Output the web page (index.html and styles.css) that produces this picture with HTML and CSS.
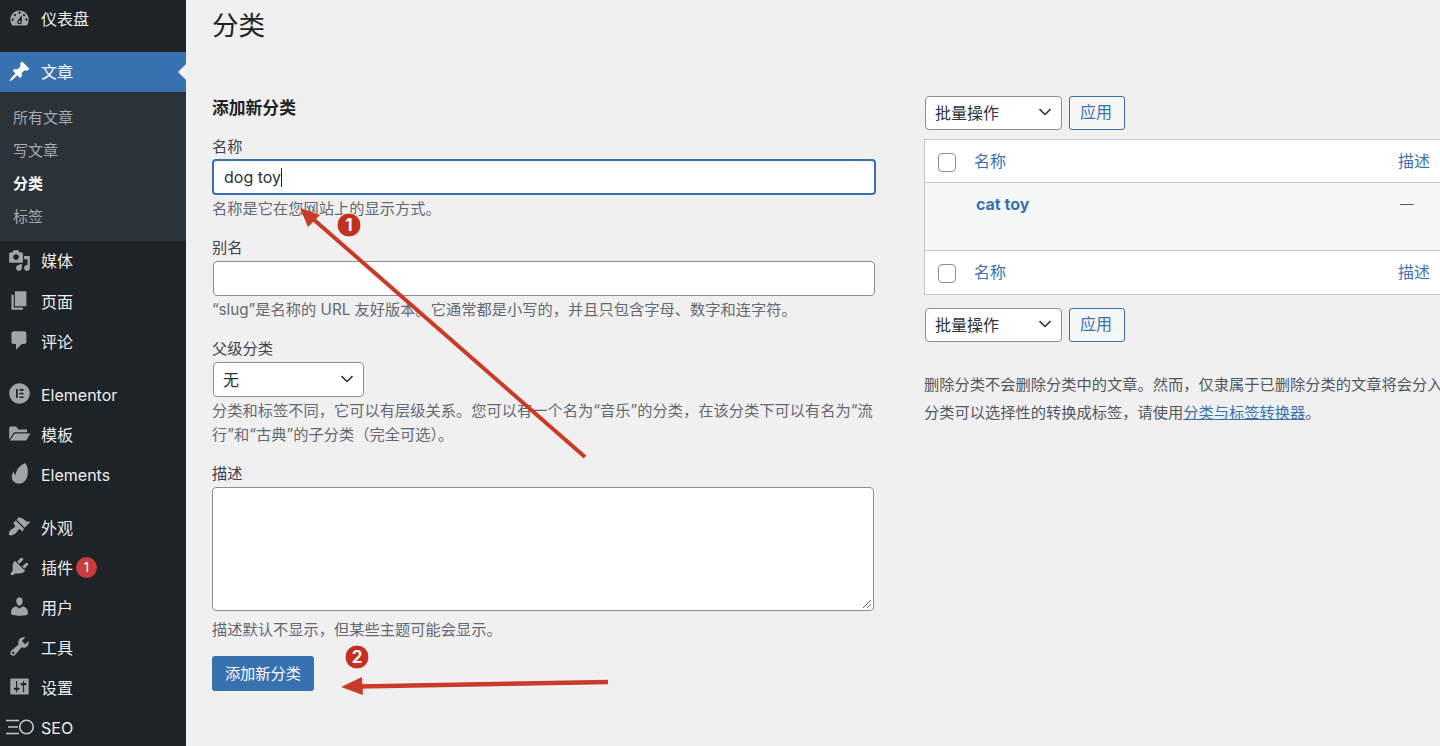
FILE: index.html
```html
<!DOCTYPE html>
<html lang="zh-CN">
<head>
<meta charset="utf-8">
<title>分类</title>
<link rel="stylesheet" href="styles.css">
</head>
<body>
<div class="page">
  <nav class="sidebar">
    <ul class="menu menu-first">
      <li class="item item-up"><svg class="icon" viewBox="0 0 20 20"><path d="M3.76 16h12.48c1.1-1.37 1.76-3.11 1.76-5 0-4.42-3.58-8-8-8s-8 3.58-8 8c0 1.89.66 3.63 1.76 5zM10 4c.55 0 1 .45 1 1s-.45 1-1 1-1-.45-1-1 .45-1 1-1zM6 6c.55 0 1 .45 1 1s-.45 1-1 1-1-.45-1-1 .45-1 1-1zm8 0c.55 0 1 .45 1 1s-.45 1-1 1-1-.45-1-1 .45-1 1-1zm-5.37 5.55L12 7v6c0 1.1-.9 2-2 2s-2-.9-2-2c0-.57.24-1.08.63-1.45zM4 10c.55 0 1 .45 1 1s-.45 1-1 1-1-.45-1-1 .45-1 1-1zm12 0c.55 0 1 .45 1 1s-.45 1-1 1-1-.45-1-1 .45-1 1-1zm-5 3c0-.55-.45-1-1-1s-1 .45-1 1 .45 1 1 1 1-.45 1-1z"/></svg>仪表盘</li>
    </ul>
    <ul class="menu">
      <li class="item item-active item-up"><svg class="icon" viewBox="0 0 20 20"><path d="M10.44 3.02l1.82-1.82 6.36 6.35-1.83 1.82c-1.05-.68-2.48-.57-3.41.36l-.75.75c-.92.93-1.04 2.35-.35 3.41l-1.83 1.82-2.41-2.41-2.8 2.79c-.42.42-3.38 2.71-3.8 2.29s1.86-3.39 2.28-3.81l2.79-2.79L4.1 9.36l1.83-1.82c1.05.69 2.48.57 3.41-.36l.75-.75c.93-.92 1.04-2.35.35-3.41z"/></svg>文章<span class="active-notch"></span></li>
      <li>
        <ul class="submenu">
          <li>所有文章</li>
          <li>写文章</li>
          <li class="current">分类</li>
          <li>标签</li>
        </ul>
      </li>
      <li class="item item-up"><svg class="icon" viewBox="0 0 20 20"><path d="M13 11V4c0-.55-.45-1-1-1h-1.67L9 1H5L3.67 3H2c-.55 0-1 .45-1 1v7c0 .55.45 1 1 1h10c.55 0 1-.45 1-1zM7 4.5c1.38 0 2.5 1.12 2.5 2.5S8.38 9.5 7 9.5 4.5 8.38 4.5 7 5.62 4.5 7 4.5zM14 6h5v10.5c0 1.38-1.12 2.5-2.5 2.5S14 17.88 14 16.5s1.12-2.5 2.5-2.5c.17 0 .34.02.5.05V9h-3V6zm-4 8.05V13h2v3.5c0 1.38-1.12 2.5-2.5 2.5S7 17.88 7 16.5 8.12 14 9.5 14c.17 0 .34.02.5.05z"/></svg>媒体</li>
      <li class="item"><svg class="icon" viewBox="0 0 20 20"><path d="M6 15V2h10v13H6zm-1 1h8v2H3V5h2v11z"/></svg>页面</li>
      <li class="item"><svg class="icon" viewBox="0 0 20 20"><path d="M5 2h9c1.1 0 2 .9 2 2v7c0 1.1-.9 2-2 2h-2l-5 5v-5H5c-1.1 0-2-.9-2-2V4c0-1.1.9-2 2-2z"/></svg>评论</li>
    </ul>
    <ul class="menu">
      <li class="item item-down"><svg class="icon" viewBox="0 0 20 20"><path fill-rule="evenodd" d="M10 1a9 9 0 1 0 0 18 9 9 0 0 0 0-18zM7 6h1.500v8H7zM10 6h3.500v1.500H10zM10 9.250h3.500v1.500H10zM10 12.500h3.500V14H10z"/></svg>Elementor</li>
      <li class="item"><svg class="icon" viewBox="0 0 20 20"><path d="M1 14.500V5l1-1h5l2 2.500h7.500V9H5.200L1.600 14.500zM5.800 10H19.400L15.800 16H1.600z"/></svg>模板</li>
      <li class="item item-down"><svg class="icon" viewBox="0 0 20 20"><path d="M15.200.8c2 3.800 2.700 7.600 1.700 11.300-1 4-3.700 6.700-7.300 6.700-4.100 0-6.800-2.900-6.200-6.800.2-1.400.9-2.800 1.700-3.900.1 1.300.4 2.700 1.400 3.400C7 6.800 10 2.600 15.200.8z"/></svg>Elements</li>
    </ul>
    <ul class="menu">
      <li class="item"><svg class="icon" viewBox="0 0 20 20"><path d="M14.48 11.06L7.41 3.99l1.5-1.5c.5-.56 2.3-.47 3.51.32 1.21.8 1.43 1.28 2.91 2.1 1.18.64 2.45 1.26 4.45.85zm-.71.71L6.7 4.7 4.93 6.47c-.39.39-.39 1.02 0 1.41l1.06 1.06c.39.39.39 1.03 0 1.42-.6.6-1.43 1.11-2.21 1.69-.35.26-.7.53-1.01.84C1.43 13.23.1 16.36 1.2 17.46c1.1 1.1 4.23-.22 5.57-1.57.31-.31.58-.66.84-1.01.58-.78 1.09-1.61 1.69-2.21.39-.39 1.02-.39 1.41 0l1.06 1.06c.39.39 1.02.39 1.41 0z"/></svg>外观</li>
      <li class="item"><svg class="icon" viewBox="0 0 20 20"><path d="M13.11 4.36L9.87 7.6 8 5.73l3.24-3.24c.35-.34 1.05-.2 1.56.32.52.51.66 1.21.31 1.55zm-8 1.77l.91-1.12 9.01 9.01-1.19.84c-.71.71-2.63 1.16-3.82 1.16H6.14L4.9 17.26c-.59.59-1.54.59-2.12 0-.59-.58-.59-1.53 0-2.12l1.24-1.24v-3.88c0-1.13.4-3.19 1.09-3.89zm7.26 3.97l3.24-3.24c.34-.35 1.04-.21 1.55.31.52.51.66 1.21.31 1.55l-3.24 3.25z"/></svg>插件<span class="count">1</span></li>
      <li class="item"><svg class="icon" viewBox="0 0 20 20"><path d="M10 9.25c-2.27 0-2.73-3.44-2.73-3.44C7 4.02 7.82 2 9.97 2c2.16 0 2.98 2.02 2.71 3.81 0 0-.41 3.44-2.68 3.44zm0 2.57L12.72 10c2.39 0 4.52 2.33 4.52 4.53v2.49s-3.65 1.13-7.24 1.13c-3.65 0-7.24-1.13-7.24-1.13v-2.49c0-2.25 1.94-4.48 4.47-4.48z"/></svg>用户</li>
      <li class="item"><svg class="icon" viewBox="0 0 20 20"><path d="M16.68 9.77c-1.34 1.34-3.3 1.67-4.95.99l-5.41 6.52c-.99.99-2.59.99-3.58 0s-.99-2.59 0-3.57l6.52-5.42c-.68-1.65-.35-3.61.99-4.95 1.28-1.28 3.12-1.62 4.72-1.06l-2.89 2.89 2.82 2.82 2.86-2.87c.53 1.58.18 3.39-1.08 4.65zM3.81 16.21c.4.39 1.04.39 1.43 0 .4-.4.4-1.04 0-1.43-.39-.4-1.03-.4-1.43 0-.39.39-.39 1.03 0 1.43z"/></svg>工具</li>
      <li class="item"><svg class="icon" viewBox="0 0 20 20"><path d="M18 16V4c0-.55-.45-1-1-1H3c-.55 0-1 .45-1 1v12c0 .55.45 1 1 1h14c.55 0 1-.45 1-1zM8 11h1c.55 0 1 .45 1 1s-.45 1-1 1H8v1.5c0 .28-.22.5-.5.5s-.5-.22-.5-.5V13H6c-.55 0-1-.45-1-1s.45-1 1-1h1V5.5c0-.28.22-.5.5-.5s.5.22.5.5V11zm5-2h-1c-.55 0-1-.45-1-1s.45-1 1-1h1V5.5c0-.28.22-.5.5-.5s.5.22.5.5V7h1c.55 0 1 .45 1 1s-.45 1-1 1h-1v5.5c0 .28-.22.5-.5.5s-.5-.22-.5-.5V9z"/></svg>设置</li>
      <li class="item item-down"><svg class="icon-seo" viewBox="0 0 30 18"><path d="M1 2.500h13M3 9h10M1 15.500h13" fill="none" stroke-width="1.400"/><circle cx="21.500" cy="9" r="6.800" fill="none" stroke-width="1.600"/></svg>SEO</li>
    </ul>
  </nav>

  <main class="content">
    <h1 class="title">分类</h1>
    <div class="columns">
      <section class="col-form">
        <h2 class="form-title">添加新分类</h2>
        <div class="field">
          <label class="label">名称</label>
          <div class="input input-focus"><span>dog toy</span><span class="caret"></span></div>
          <p class="help">名称是它在您网站上的显示方式。</p>
        </div>
        <div class="field">
          <label class="label">别名</label>
          <div class="input input-alias"></div>
          <p class="help">“slug”是名称的 URL 友好版本。它通常都是小写的，并且只包含字母、数字和连字符。</p>
        </div>
        <div class="field">
          <label class="label">父级分类</label>
          <div class="select select-parent"><span>无</span><svg class="chevron" viewBox="0 0 14 8"><path d="M1.500 1.200 7 6.500l5.500-5.300"/></svg></div>
          <p class="help">分类和标签不同，它可以有层级关系。您可以有一个名为“音乐”的分类，在该分类下可以有名为“流行”和“古典”的子分类（完全可选）。</p>
        </div>
        <div class="field">
          <label class="label">描述</label>
          <div class="textarea"><svg class="grip" viewBox="0 0 10 10"><path d="M9 1 1 9M9 5 5 9"/></svg></div>
          <p class="help help-gap">描述默认不显示，但某些主题可能会显示。</p>
        </div>
        <div class="submit">添加新分类</div>
      </section>

      <section class="col-list">
        <div class="toolbar">
          <div class="select select-bulk"><span>批量操作</span><svg class="chevron" viewBox="0 0 14 8"><path d="M1.500 1.200 7 6.500l5.500-5.300"/></svg></div>
          <div class="apply">应用</div>
        </div>
        <div class="table">
          <div class="row row-head"><span class="check"></span><span class="link name">名称</span><span class="link desc">描述</span></div>
          <div class="row row-body"><strong class="link term">cat toy</strong><span class="dash">—</span></div>
          <div class="row row-foot"><span class="check"></span><span class="link name">名称</span><span class="link desc">描述</span></div>
        </div>
        <div class="toolbar toolbar-bottom">
          <div class="select select-bulk"><span>批量操作</span><svg class="chevron" viewBox="0 0 14 8"><path d="M1.500 1.200 7 6.500l5.500-5.300"/></svg></div>
          <div class="apply">应用</div>
        </div>
        <div class="notes">
          <p>删除分类不会删除分类中的文章。然而，仅隶属于已删除分类的文章将会分入</p>
          <p>分类可以选择性的转换成标签，请使用<a class="underline">分类与标签转换器</a>。</p>
        </div>
      </section>
    </div>
  </main>

  <svg class="annotations" viewBox="0 0 1440 746">
    <g class="arrow">
      <path class="shaft" d="M585 457 312 218"/>
      <path class="head" d="M300 208 320 215 308 227z"/>
      <path class="shaft shaft-thick" d="M608 682 358 686.500"/>
      <path class="head" d="M341 687 362 677 363 695z"/>
    </g>
    <g class="marker">
      <circle cx="349" cy="225" r="12"/>
      <text x="349" y="231">1</text>
      <circle cx="357" cy="657" r="12"/>
      <text x="357" y="663">2</text>
    </g>
  </svg>
</div>
</body>
</html>
```

FILE: styles.css
```css
* { box-sizing: border-box; }

html, body {
  margin: 0;
  height: 100%;
  overflow: hidden;
}

body {
  background: #f0f0f1;
  color: #3c434a;
  font-family: Inter, "Noto Sans CJK SC", "Liberation Sans", sans-serif;
  font-size: 15.250px;
}

ul { list-style: none; margin: 0; padding: 0; }
p, h1, h2 { margin: 0; }

.page {
  position: relative;
  display: flex;
  width: 1440px;
  height: 746px;
  overflow: hidden;
}

/* Sidebar */
.sidebar {
  flex: 0 0 186px;
  background: #1d2327;
  color: #f0f0f1;
  height: 746px;
  overflow: hidden;
}

.menu { margin-top: 13px; }
.menu-first { margin-top: -1px; }

.item {
  position: relative;
  display: flex;
  align-items: center;
  height: 40px;
  padding-left: 41px;
  font-size: 16px;
  color: #eeeff0;
}

.item-up { padding-bottom: 2px; }
.item-down { padding-top: 2px; }

.icon {
  position: absolute;
  left: 8px;
  top: 8px;
  width: 23px;
  height: 23px;
  fill: #a0a5aa;
}

.item-active {
  background: #3871b0;
  color: #fff;
}
.item-active .icon { fill: #fff; }

.active-notch {
  position: absolute;
  right: 0;
  top: 12px;
  border: 8px solid transparent;
  border-right-color: #f0f0f1;
  border-left-width: 0;
}

.submenu {
  background: #2c3338;
  height: 149px;
  padding: 9px 0 0 13px;
  font-size: 15px;
  color: #a6a9ad;
}
.submenu li {
  height: 33px;
  line-height: 33px;
}
.submenu .current {
  color: #fff;
  font-weight: 700;
}

.count {
  margin-left: 3px;
  width: 21px;
  height: 21px;
  border-radius: 50%;
  background: #c83c3c;
  color: #fff;
  font-size: 13px;
  line-height: 21px;
  text-align: center;
}

.icon-seo {
  position: absolute;
  left: 5px;
  top: 11px;
  width: 30px;
  height: 18px;
  stroke: #c4c6c8;
}

/* Main */
.content {
  flex: 1 0 0;
  min-width: 0;
  padding: 8px 0 0 26px;
}

.title {
  font-size: 26.500px;
  font-weight: 400;
  line-height: 34px;
  color: #1d2327;
}

.columns {
  display: flex;
  gap: 48px;
  margin-top: 54px;
}

.col-form { flex: 0 0 664px; }
.col-list { flex: 0 0 640px; }

.form-title {
  padding-top: 1px;
  font-size: 16.800px;
  font-weight: 600;
  line-height: 22px;
  color: #1d2327;
}

.field { margin-top: 16px; }

.label {
  display: block;
  line-height: 22px;
  margin-bottom: 2px;
}

.form-title + .field .label {
  padding-top: 1px;
  margin-bottom: 1px;
}

.help {
  margin-top: 2px;
  line-height: 24px;
  color: #646970;
}
.help-gap { margin-top: 7px; }

.input {
  display: flex;
  align-items: center;
  background: #fff;
  border: 1px solid #8c8f94;
  border-radius: 4px;
  padding: 0 10px;
}

.input-focus {
  height: 36px;
  border: 2px solid #3871b0;
  font-size: 16px;
  color: #2c3338;
}

.input-alias {
  height: 35px;
  margin: 0 1px;
}

.caret {
  width: 1px;
  height: 19px;
  background: #1d2327;
}

.select {
  display: flex;
  align-items: center;
  justify-content: space-between;
  height: 35px;
  padding: 0 9px 2px;
  background: #fff;
  border: 1px solid #8c8f94;
  border-radius: 4px;
  font-size: 16px;
  color: #2c3338;
}

.select-parent { width: 151px; margin-left: 1px; }
.select-bulk { width: 137px; height: 34px; }

.chevron {
  width: 14px;
  height: 8px;
  fill: none;
  stroke: #2c3338;
  stroke-width: 1.600;
}

.textarea {
  position: relative;
  width: 662px;
  height: 124px;
  background: #fff;
  border: 1px solid #8c8f94;
  border-radius: 4px;
}

.grip {
  position: absolute;
  right: 1px;
  bottom: 1px;
  width: 10px;
  height: 10px;
  fill: none;
  stroke: #646970;
}

.submit {
  width: 102px;
  height: 35px;
  margin-top: 14px;
  background: #3871b0;
  border-radius: 3px;
  color: #fff;
  line-height: 35px;
  text-align: center;
}

/* List column */
.toolbar {
  display: flex;
  gap: 7px;
  margin-left: 1px;
}
.toolbar-bottom { margin-top: 13px; }

.apply {
  width: 56px;
  height: 34px;
  padding-right: 2px;
  background: #f6f7f7;
  border: 1px solid #3871b0;
  border-radius: 3px;
  color: #3871b0;
  font-size: 16px;
  line-height: 30px;
  text-align: center;
}

.table {
  margin-top: 9px;
  background: #fff;
  border: 1px solid #c3c4c7;
}

.row {
  position: relative;
  display: flex;
  align-items: center;
}

.row-head {
  height: 43px;
  border-bottom: 1px solid #c3c4c7;
  padding-left: 13px;
}

.row-body {
  height: 68px;
  align-items: flex-start;
  background: #f6f7f7;
  border-bottom: 1px solid #c3c4c7;
  padding: 10px 0 0 51px;
}

.row-foot {
  height: 43px;
  padding-left: 13px;
}

.check {
  width: 18px;
  height: 19px;
  margin-top: 2px;
  background: #fff;
  border: 1px solid #8c8f94;
  border-radius: 4px;
}

.link { color: #3871b0; font-size: 16px; }
.name { margin-left: 18px; padding-bottom: 2px; }
.desc { margin-left: 392px; padding-bottom: 2px; }
.row-foot .name, .row-foot .desc { padding-bottom: 3px; }

.term {
  font-weight: 700;
  font-size: 16px;
  line-height: 22px;
}

.dash {
  position: absolute;
  left: 475px;
  top: 10px;
  font-size: 13.500px;
  line-height: 22px;
  color: #50575e;
}

.notes {
  margin-top: 29px;
  line-height: 28px;
  color: #50575e;
  white-space: nowrap;
}

.underline {
  color: #3871b0;
  text-decoration: underline;
}

/* Annotations over the page */
.annotations {
  position: absolute;
  inset: 0;
  width: 1440px;
  height: 746px;
  pointer-events: none;
}

.shaft {
  stroke: #c93a28;
  stroke-width: 4;
  fill: none;
}
.shaft-thick { stroke-width: 4.500; }
.head { fill: #c93a28; }

.marker circle { fill: #c4301f; stroke: #f4f4f4; stroke-width: 1; }
.marker text {
  fill: #fff;
  font-family: Inter, sans-serif;
  font-size: 17px;
  font-weight: 700;
  text-anchor: middle;
}
```
